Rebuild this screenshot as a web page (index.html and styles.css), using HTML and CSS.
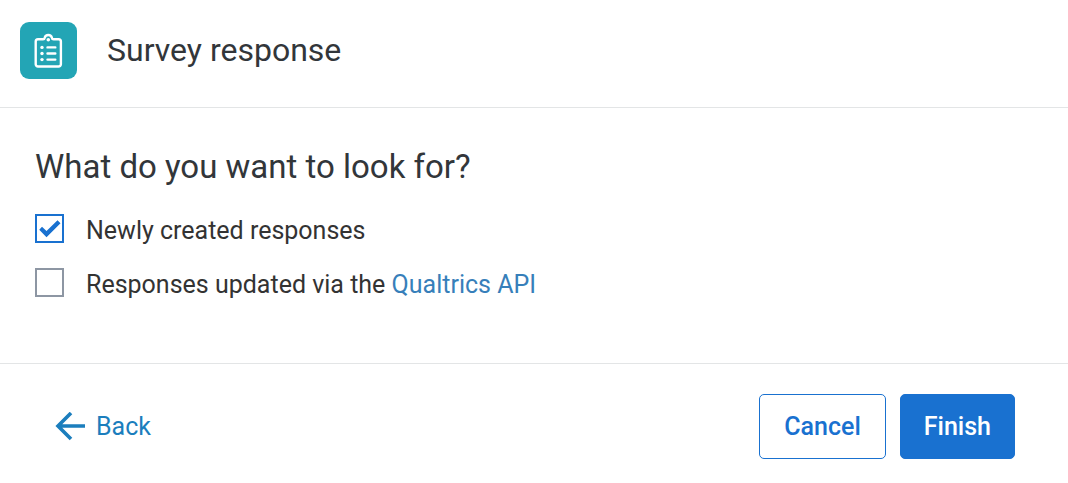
FILE: index.html
```html
<!DOCTYPE html>
<html lang="en">
<head>
<meta charset="utf-8">
<meta name="viewport" content="width=device-width, initial-scale=1">
<title>Survey response</title>
<link rel="stylesheet" href="styles.css">
</head>
<body>
<form class="dialog">
  <header class="dialog-header">
    <span class="survey-icon">
      <svg viewBox="0 0 57 57" aria-hidden="true" fill="none" stroke="#fff" stroke-linecap="round" stroke-linejoin="round">
        <path stroke-width="2.4" d="M23 17.300H18a2.300 2.300 0 0 0-2.300 2.300v22.600a2.300 2.300 0 0 0 2.300 2.300h20.600a2.300 2.300 0 0 0 2.300-2.300V19.600a2.300 2.300 0 0 0-2.300-2.300H33.600c-1.300 0-1.600-.8-1.700-1.500a3.700 3.700 0 0 0-7.200 0c-.1.700-.4 1.500-1.700 1.500z"/>
        <path stroke-width="2.400" d="M27.500 25.400h7.800M27.500 31.500h7.800M27.500 37.600h7.800"/>
        <g fill="#fff" stroke="none"><circle cx="22" cy="25.400" r="1.700"/><circle cx="22" cy="31.500" r="1.700"/><circle cx="22" cy="37.600" r="1.700"/><circle cx="28.300" cy="17.800" r="1.800"/></g>
      </svg>
    </span>
    <h1 class="title">Survey response</h1>
  </header>
  <main class="dialog-body">
    <fieldset class="choices">
      <legend class="question">What do you want to look for?</legend>
      <div class="choice">
        <input class="checkbox" type="checkbox" id="created" checked>
        <label for="created">Newly created responses</label>
      </div>
      <div class="choice">
        <input class="checkbox" type="checkbox" id="updated">
        <label for="updated">Responses updated via the <a class="api-link" href="#api">Qualtrics API</a></label>
      </div>
    </fieldset>
  </main>
  <footer class="dialog-footer">
    <button class="back" type="button">
      <svg class="arrow" viewBox="0 0 30 30" aria-hidden="true" fill="none" stroke="currentColor" stroke-width="3.600"><path d="M3 14H30M16 1 3 14l13 13"/></svg>
      Back
    </button>
    <div class="actions">
      <button class="button" type="button">Cancel</button>
      <button class="button primary" type="submit">Finish</button>
    </div>
  </footer>
</form>
</body>
</html>
```
FILE: styles.css
```css
* { box-sizing: border-box; }

body {
  margin: 0;
  background: #fff;
  color: #333;
  font-family: Roboto, "Liberation Sans", sans-serif;
  font-size: 25px;
  line-height: 32px;
}

button { font: inherit; cursor: pointer; }

.dialog-header {
  display: flex;
  align-items: center;
  gap: 30px;
  padding: 22px 20px 28px;
  border-bottom: 1px solid #e3e5e6;
}

.survey-icon {
  width: 57px;
  height: 57px;
  border-radius: 9px;
  background: #23a5b5;
}

.survey-icon svg { display: block; }

.title,
.question {
  margin: 0;
  padding: 0;
  color: #32363a;
  font-size: 32px;
  font-weight: 400;
  line-height: 40px;
}

.title { padding-bottom: 2px; }

.dialog-body {
  padding: 39px 35px 62px;
  border-bottom: 1px solid #e3e5e6;
}

.choices {
  margin: 0;
  padding: 0;
  border: 0;
}

.question {
  margin-bottom: 27px;
  font-size: 33px;
}

.choice {
  display: flex;
  align-items: center;
  gap: 22px;
}

.choice + .choice { margin-top: 21px; }

.checkbox {
  appearance: none;
  flex: none;
  display: grid;
  width: 29px;
  height: 29px;
  margin: 0 0 4px;
  border: 2px solid #8d96a3;
  background: #fff;
}

.checkbox:checked { border-color: #1971d0; }

.checkbox:checked::before {
  content: "";
  background: #1971d0;
  clip-path: polygon(9% 55%, 20% 43%, 38% 60%, 82% 17%, 94% 29%, 38% 85%);
}

.api-link {
  color: #377fba;
  text-decoration: none;
}

.dialog-footer {
  display: flex;
  align-items: center;
  justify-content: space-between;
  padding: 30px 53px 24px 55px;
}

.back {
  display: flex;
  align-items: center;
  gap: 11px;
  padding: 0;
  border: 0;
  background: none;
  color: #1b7ebd;
}

.arrow {
  width: 30px;
  height: 30px;
}

.actions {
  display: flex;
  gap: 14px;
}

.button {
  padding: 16px 24px 15px;
  border: 1px solid #1971d0;
  border-radius: 5px;
  background: #fff;
  color: #1971d0;
  font-weight: 500;
}

.primary {
  padding-inline: 23px;
  background: #1971d0;
  color: #fff;
}
```
